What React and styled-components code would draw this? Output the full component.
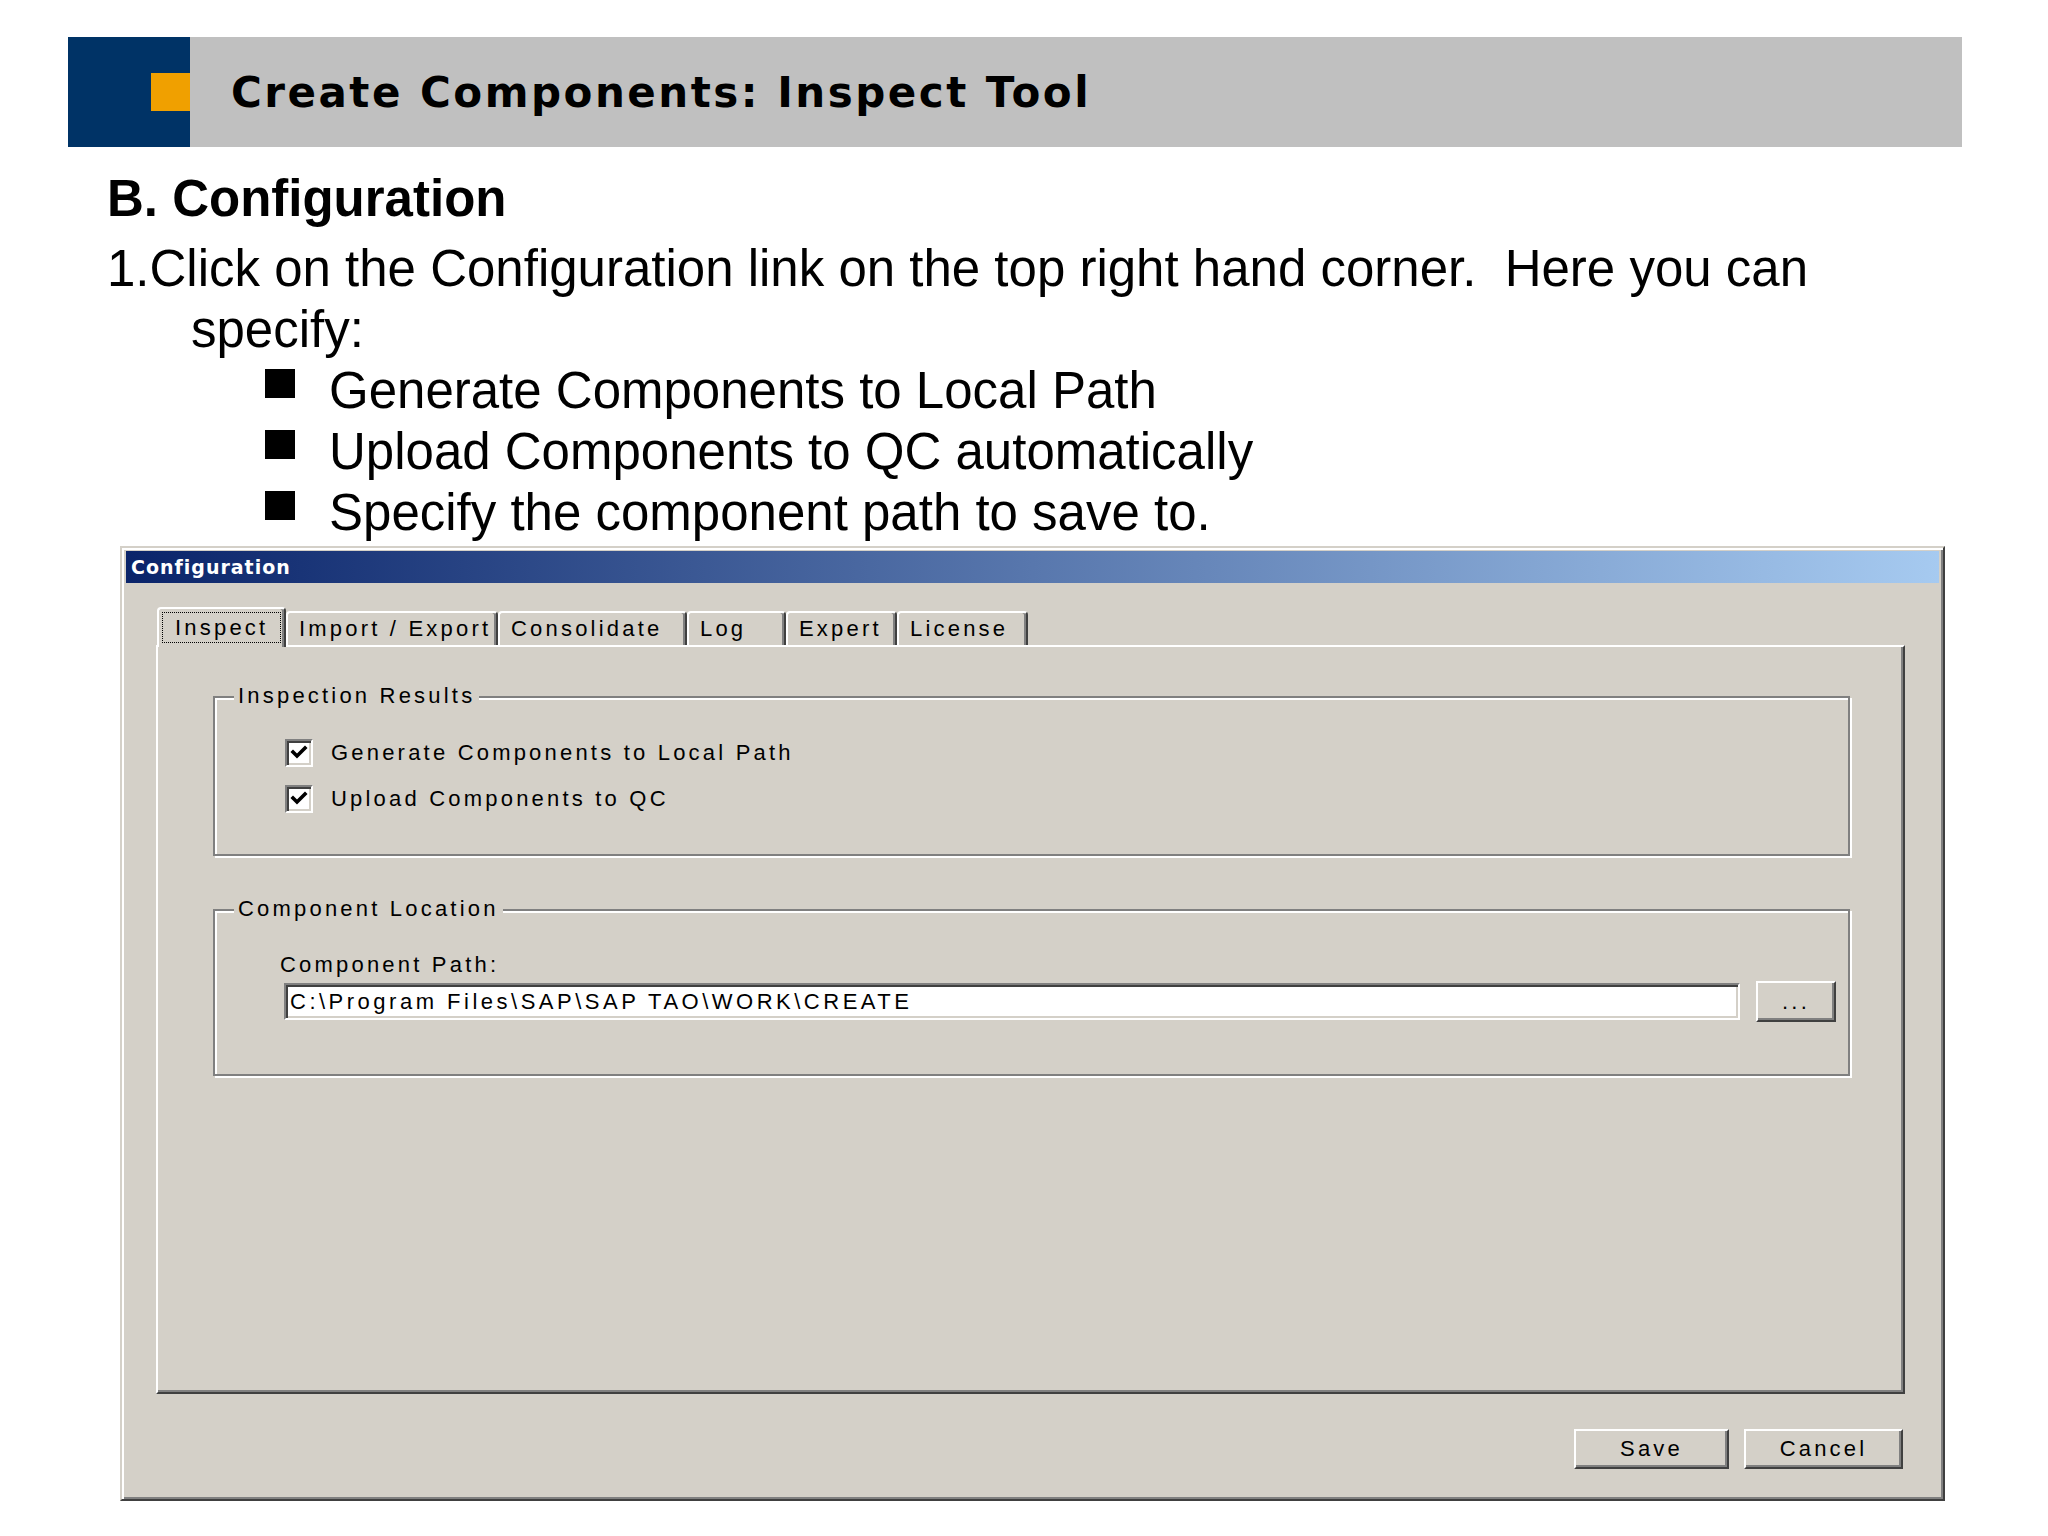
import React from 'react';
import styled, { createGlobalStyle } from 'styled-components';

const GlobalStyle = createGlobalStyle`
	html, body {
		margin: 0;
		padding: 0;
		background: #ffffff;
	}
	* {
		box-sizing: border-box;
	}
`;

const Page = styled.div`
	width: 2048px;
	height: 1536px;
	padding-top: 37px;
	background: #ffffff;
	font-family: 'Liberation Sans', Arial, sans-serif;
	color: #000;
	overflow: hidden;
`;

const Header = styled.header`
	display: flex;
	align-items: center;
	margin-left: 68px;
	width: 1894px;
	height: 110px;
	background: #c0c0c0;
`;

const HeaderMark = styled.div`
	display: flex;
	align-items: center;
	justify-content: flex-end;
	width: 122px;
	height: 100%;
	background: #003366;
`;

const Accent = styled.div`
	width: 39px;
	height: 38px;
	background: #f0a000;
`;

const HeaderTitle = styled.h1`
	margin: 0 0 0 41px;
	font-family: 'DejaVu Sans', Verdana, sans-serif;
	font-weight: bold;
	font-size: 42px;
	letter-spacing: 2.5px;
	color: #000;
`;

const Content = styled.main`
	display: flex;
	flex-direction: column;
	padding-left: 107px;
`;

const Heading = styled.h2`
	margin: 21px 0 0;
	font-size: 51px;
	line-height: 61px;
	font-weight: bold;
`;

const Step = styled.p`
	margin: 9px 0 0;
	width: 1760px;
	padding-left: 84px;
	text-indent: -84px;
	font-size: 51px;
	line-height: 61px;
`;

const Bullets = styled.ul`
	list-style: none;
	margin: 0;
	padding: 0 0 0 158px;
`;

const Bullet = styled.li`
	display: flex;
	align-items: flex-start;
	gap: 34px;
	font-size: 51px;
	line-height: 61px;
`;

const Square = styled.span`
	flex: none;
	width: 30px;
	height: 29px;
	margin-top: 9px;
	background: #000;
`;

const Dialog = styled.section`
	display: flex;
	flex-direction: column;
	width: 1825px;
	height: 955px;
	margin: 3px 0 0 13px;
	padding: 3px 4px 4px;
	background: #d4d0c8;
	border: 2px solid;
	border-color: #d4d0c8 #404040 #404040 #d4d0c8;
	box-shadow: inset 2px 2px 0 #ffffff, inset -2px -2px 0 #808080;
	font-size: 22px;
	letter-spacing: 3.2px;
`;

const TitleBar = styled.div`
	display: flex;
	align-items: center;
	height: 32px;
	padding-left: 5px;
	background: linear-gradient(to right, #0a246a, #a6caf0);
	color: #fff;
	font-family: 'DejaVu Sans', Verdana, sans-serif;
	font-weight: bold;
	font-size: 19px;
	letter-spacing: 1px;
`;

const DialogBody = styled.div`
	display: flex;
	flex-direction: column;
	padding: 24px 34px 0 30px;
`;

const TabRow = styled.div`
	position: relative;
	z-index: 1;
	display: flex;
	align-items: flex-end;
	height: 38px;
	padding-left: 1px;
`;

const Tab = styled.div`
	display: flex;
	align-items: ${(p) => (p.$active ? 'flex-start' : 'center')};
	width: ${(p) => p.$w}px;
	height: ${(p) => (p.$active ? 40 : 34)}px;
	margin-bottom: ${(p) => (p.$active ? -2 : 0)}px;
	padding: ${(p) => (p.$active ? '3px 0 0 3px' : '0 0 0 11px')};
	background: #d4d0c8;
	border-top: 2px solid #ffffff;
	border-left: 2px solid #ffffff;
	border-right: 2px solid #404040;
	border-radius: 4px 4px 0 0;
	box-shadow: inset -2px 0 0 #808080;
	white-space: nowrap;
`;

const FocusRing = styled.span`
	height: 31px;
	line-height: 29px;
	padding: 0 12px;
	border: 1px dotted #000;
`;

const Panel = styled.div`
	display: flex;
	flex-direction: column;
	height: 749px;
	padding: 49px 53px 0 55px;
	border: 2px solid;
	border-color: #ffffff #404040 #404040 #ffffff;
	box-shadow: inset -2px -2px 0 #808080;
`;

const GroupBox = styled.div`
	position: relative;
	margin-top: ${(p) => p.$gap || 0}px;
	padding: ${(p) => p.$pad};
	border: 2px solid #808080;
	box-shadow: inset 2px 2px 0 #ffffff, 2px 2px 0 #ffffff;
`;

const GroupLabel = styled.span`
	position: absolute;
	top: -16px;
	left: 19px;
	height: 28px;
	line-height: 28px;
	padding: 0 4px;
	background: #d4d0c8;
	white-space: nowrap;
`;

const CheckRow = styled.label`
	display: flex;
	align-items: center;
	gap: 18px;
	height: 46px;
`;

const CheckBox = styled.span`
	display: flex;
	align-items: center;
	justify-content: center;
	flex: none;
	width: 28px;
	height: 28px;
	background: #ffffff;
	border: 2px solid;
	border-color: #808080 #ffffff #ffffff #808080;
	box-shadow: inset 2px 2px 0 #404040, inset -2px -2px 0 #d4d0c8;
`;

const FieldLabel = styled.div`
	height: 28px;
	line-height: 28px;
	padding-left: ${(p) => p.$indent}px;
	margin-bottom: 2px;
`;

const FieldRow = styled.div`
	display: flex;
	align-items: center;
	gap: 16px;
	padding-left: ${(p) => p.$indent}px;
`;

const PathField = styled.div`
	flex: 1;
	height: 37px;
	line-height: 33px;
	padding-left: 4px;
	background: #ffffff;
	border: 2px solid;
	border-color: #808080 #ffffff #ffffff #808080;
	box-shadow: inset 2px 2px 0 #404040, inset -2px -2px 0 #d4d0c8;
	letter-spacing: 3.5px;
	white-space: nowrap;
	overflow: hidden;
`;

const Button = styled.button`
	display: flex;
	align-items: center;
	justify-content: center;
	width: ${(p) => p.$w}px;
	height: ${(p) => p.$h || 40}px;
	padding: 0;
	background: #d4d0c8;
	border: 2px solid;
	border-color: #ffffff #404040 #404040 #ffffff;
	box-shadow: inset -2px -2px 0 #808080;
	font-family: 'Liberation Sans', Arial, sans-serif;
	font-size: 22px;
	letter-spacing: 3.2px;
	color: #000;
`;

const Footer = styled.div`
	display: flex;
	justify-content: flex-end;
	gap: 15px;
	margin-top: 35px;
	padding-right: 2px;
`;

const Check = () => (
	<svg width="18" height="18" viewBox="0 0 18 18">
		<path d="M3 8 L7 12 L15 4" fill="none" stroke="#000" strokeWidth="3.6" strokeLinecap="square" />
	</svg>
);

const tabs = [
	{ label: 'Inspect', w: 129, active: true },
	{ label: 'Import / Export', w: 212 },
	{ label: 'Consolidate', w: 189 },
	{ label: 'Log', w: 99 },
	{ label: 'Expert', w: 111 },
	{ label: 'License', w: 131 },
];

const bullets = [
	'Generate Components to Local Path',
	'Upload Components to QC automatically',
	'Specify the component path to save to.',
];

const options = ['Generate Components to Local Path', 'Upload Components to QC'];

export default function App() {
	return (
		<>
			<GlobalStyle />
			<Page>
				<Header>
					<HeaderMark>
						<Accent />
					</HeaderMark>
					<HeaderTitle>Create Components: Inspect Tool</HeaderTitle>
				</Header>
				<Content>
					<Heading>B. Configuration</Heading>
					<Step>1.Click on the Configuration link on the top right hand corner.&nbsp; Here you can specify:</Step>
					<Bullets>
						{bullets.map((text) => (
							<Bullet key={text}>
								<Square />
								<span>{text}</span>
							</Bullet>
						))}
					</Bullets>
					<Dialog>
						<TitleBar>Configuration</TitleBar>
						<DialogBody>
							<TabRow>
								{tabs.map((tab) => (
									<Tab key={tab.label} $w={tab.w} $active={tab.active}>
										{tab.active ? <FocusRing>{tab.label}</FocusRing> : tab.label}
									</Tab>
								))}
							</TabRow>
							<Panel>
								<GroupBox $pad="32px 0 32px 70px">
									<GroupLabel>Inspection Results</GroupLabel>
									{options.map((text) => (
										<CheckRow key={text}>
											<CheckBox>
												<Check />
											</CheckBox>
											{text}
										</CheckRow>
									))}
								</GroupBox>
								<GroupBox $gap={53} $pad="40px 12px 52px 0">
									<GroupLabel>Component Location</GroupLabel>
									<FieldLabel $indent={65}>Component Path:</FieldLabel>
									<FieldRow $indent={69}>
										<PathField>C:\Program Files\SAP\SAP TAO\WORK\CREATE</PathField>
										<Button $w={80} $h={41}>...</Button>
									</FieldRow>
								</GroupBox>
							</Panel>
							<Footer>
								<Button $w={155}>Save</Button>
								<Button $w={159}>Cancel</Button>
							</Footer>
						</DialogBody>
					</Dialog>
				</Content>
			</Page>
		</>
	);
}
